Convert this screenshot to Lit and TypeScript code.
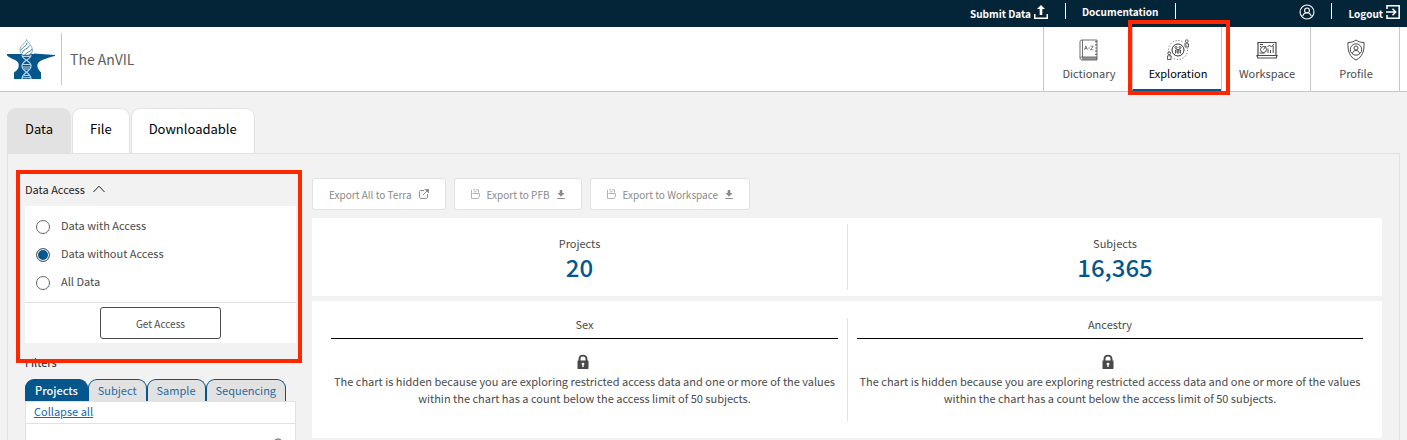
import { LitElement, html, css, svg } from "lit";
import { customElement, state } from "lit/decorators.js";

const person = svg`<circle cx="10" cy="8" r="3"/><path d="M4.8 15.2c.5-3 2.500-4.200 5.200-4.200s4.700 1.200 5.200 4.200"/>`;

const icons = {
  upload: svg`<svg class="fill" width="14" height="14" viewBox="0 0 14 14" aria-hidden="true"><path d="M7 0l4 4H8.300v6H5.700V4H3zM0 9h1.500v3.400h11V9H14v5H0z"/></svg>`,
  user: svg`<svg class="line strong" width="16" height="16" viewBox="0 0 20 20" aria-hidden="true"><circle cx="10" cy="10" r="8.700"/>${person}</svg>`,
  logout: svg`<svg class="line bold" width="14" height="14" viewBox="0 0 14 14" aria-hidden="true"><path d="M1 4V.8h12.200v12.400H1V10M0 7h9.500M6.500 3.800L9.700 7l-3.200 3.200"/></svg>`,
  dictionary: svg`<svg class="line" width="20" height="22" viewBox="0 0 20 22" aria-hidden="true"><path d="M3 1h15v17H3C.8 18 .8 21 3 21h15v-3M3 1C1.600 1 1 1.700 1 3v16.500M3.500 1v17" stroke-width=".8"/><path class="soft" d="M3 19.500h15" stroke-width="2.600"/><path d="M17 2v16" stroke-width="1.600" stroke-dasharray="1.200 2"/><path d="M5.400 10.800L6.900 7l1.500 3.800M6 9.600h1.800M9.300 9h1.400M11.500 7.200h2.800l-2.800 3.500h2.900" stroke-width=".7"/></svg>`,
  exploration: svg`<svg class="line" width="22" height="22" viewBox="0 0 22 22" aria-hidden="true"><circle cx="11" cy="11" r="6"/><circle cx="11" cy="11" r="9.500" stroke-width=".8" stroke-dasharray="1 2"/><g stroke-width=".8"><circle cx="9" cy="8.500" r="1"/><circle cx="13" cy="8.500" r="1"/><path d="M8.500 14.500V11h5v3.500M11 10.500v4.500M8.500 13h5M9.500 10l1.500 1 1.500-1"/><circle cx="19.800" cy="2.200" r="1.400"/><path d="M18 8V4.800h3.500V8z"/><circle cx="2.200" cy="14.200" r="1.400"/><path d="M.5 20.500v-3.700H4v3.700z"/></g></svg>`,
  workspace: svg`<svg class="line" width="22" height="22" viewBox="0 0 22 22" aria-hidden="true"><path d="M2 16V3.500h18V16M1 16.500h20l-.8 2.500H1.800z" stroke-width="1.200"/><path d="M4 5.500h3M4 7.500h1M3.500 14h5"/><circle cx="7.500" cy="10.500" r="3"/><path d="M7.500 10.500L10 7M12 14V9.500M14.500 14v-3M17.200 14V7M11.500 8l2-2 2 2 2.500-3"/></svg>`,
  profile: svg`<svg class="line" width="20" height="22" viewBox="0 0 20 22" aria-hidden="true"><path d="M10 1c2.200 1.800 5 2.500 8 2.500C18.500 12 16.500 17.800 10 21 3.500 17.800 1.500 12 2 3.500c3 0 5.800-.7 8-2.500z"/><circle cx="10" cy="10.500" r="5.700"/><circle cx="10" cy="9" r="2"/><path d="M6.500 14.500c.5-2.200 1.600-3 3.500-3s3 .8 3.500 3"/></svg>`,
  external: svg`<svg class="line" width="10" height="10" viewBox="0 0 10 10" aria-hidden="true"><path d="M5 1.500H1.500C1 1.500.6 1.900.6 2.400v6c0 .5.400 1 .9 1h6c.5 0 1-.5 1-1V5M4 6l4.500-4.500"/><path class="solid" d="M6 .2h3.800V4z"/></svg>`,
  folder: svg`<svg class="line pale" width="9" height="10" viewBox="0 0 9 10" aria-hidden="true"><path d="M.5 9.500V.8M2 .8h2M5 .8h2.500v2.700M.5 9.500h6.800l1.200-2.500V4.500H1.600M3 2.800h2.500"/></svg>`,
  download: svg`<svg class="fill" width="8" height="9" viewBox="0 0 8 9" aria-hidden="true"><path d="M2.700 0h2.600v3H7.500L4 6.700.5 3h2.200zM.3 8h7.400v1H.3z"/></svg>`,
  lock: svg`<svg class="fill" width="16" height="16" viewBox="0 0 16 16" aria-hidden="true"><path fill-rule="evenodd" d="M1.500 6.500V5C1.500 2.300 3.300.8 6 .8S10.500 2.300 10.500 5v1.500H11c.3 0 .5.200.5.500v7.500c0 .3-.2.500-.5.500H1c-.3 0-.5-.2-.5-.5V7c0-.3.2-.5.5-.5zm2 0h5V5c0-1.600-1-2.400-2.500-2.400S3.500 3.400 3.500 5zM6 8.700c-.9 0-1.400.6-1.400 1.300 0 .5.300.9.700 1.100V13h1.400v-1.900c.4-.2.700-.6.700-1.100 0-.7-.5-1.300-1.400-1.300z"/></svg>`,
  caret: svg`<svg class="line" width="12" height="8" viewBox="0 0 12 8" aria-hidden="true"><path d="M.5 7L6 1.200 11.500 7"/></svg>`,
};

const logo = svg`<svg class="logo" width="48" height="40" viewBox="0 0 48 40" role="img" aria-label="AnVIL">
  <path fill="#05568d" d="M0 15h27v-.5l21 1.500v1C42 18.500 33.500 21 31 24c-1.500 3-.5 6 3 9.500V40H7v-6.500c4-2.500 5.500-5.500 4.500-9C10.500 21 4 20 0 16.500z"/>
  <path fill="#fff" stroke="#6d9dbf" stroke-width=".8" d="M19.500.5c.7 3 6 5.500 6 10.500 0 2.500-1.500 4-3 5h-6.500c-1.500-1-3-2.500-3-5 0-5 5.700-6 6.500-10.500z"/>
  <path fill="none" stroke="#3f7ca9" d="M20 4c0 3-5 4-6 7.500M22.500 6.500C21.500 10 16 10 15 14M25 10c-1 3-6 3-7 6M24.500 14l-3 2.500"/>
  <path fill="none" stroke="#b9d7ea" stroke-width="1.200" d="M15 16c0 5 9 5 9 11s-9 6-9 13M24 16c0 5-9 5-9 11s9 6 9 13"/>
  <path fill="none" stroke="#b9d7ea" d="M16 17.500h7M16 25.500h7M15.500 28h8M17 30h5M16.500 36.500h6M15.500 38.700h8"/>
</svg>`;

const navItems = [
  { label: "Dictionary", icon: icons.dictionary },
  { label: "Exploration", icon: icons.exploration },
  { label: "Workspace", icon: icons.workspace },
  { label: "Profile", icon: icons.profile },
];

@customElement("app-root")
export class AppRoot extends LitElement {
  @state() access = "Data without Access";
  @state() page = "Exploration";
  @state() tab = "Data";
  @state() filter = "Projects";

  static styles = css`
    :host {
      display: block;
      height: 100vh;
      overflow: hidden;
      background: #f2f2f2;
      color: #4a4a4a;
      font: 11px/17px "Noto Sans CJK SC", "Open Sans", sans-serif;
    }
    * { box-sizing: border-box; }
    a { color: inherit; text-decoration: none; }
    button { font: inherit; color: inherit; margin: 0; cursor: pointer; }
    svg { display: block; flex: none; }
    .line { fill: none; stroke: currentColor; stroke-width: 1; }
    .strong { stroke-width: 1.4; }
    .bold { stroke-width: 1.6; }
    .pale { opacity: .65; }
    .soft { opacity: .6; }
    .fill, .solid { fill: currentColor; }

    .top {
      display: flex;
      justify-content: flex-end;
      height: 27px;
      padding: 3px 7px 0 0;
      background: #042538;
      color: #fff;
      font-size: 10px;
      font-weight: 700;
    }
    .top-item { display: flex; gap: 3px; height: 16px; padding: 0 17px 0 16px; }
    .top-item + .top-item { border-left: 1px solid #fff; }
    .top-item .low { padding-top: 2px; }
    .top .account { padding: 1px 16px 0 123px; }
    .top .end { padding-right: 0; }

    .bar {
      display: flex;
      align-items: center;
      height: 65px;
      padding: 0 7px;
      background: #fff;
      border-bottom: 1px solid #c6c6c6;
    }
    .brand {
      display: flex;
      align-items: center;
      margin-left: 6px;
      padding-left: 8px;
      height: 52px;
      border-left: 1px solid #c6c6c6;
      font-size: 14px;
      color: #606060;
    }
    .nav { display: flex; height: 64px; margin-left: auto; border-right: 1px solid #c6c6c6; }
    .nav-item {
      position: relative;
      display: flex;
      flex-direction: column;
      align-items: center;
      gap: 4px;
      width: 89px;
      padding: 12px 0 0 2px;
      border-left: 1px solid #c6c6c6;
    }
    .nav-item svg { height: 22px; }
    .nav-item.on { color: #000; border-bottom: 2px solid #05568d; }
    .nav-item.on svg { color: #333; }
    .mark { position: absolute; border: 4px solid #ff2600; pointer-events: none; }
    .nav-mark { inset: -7px -9px -6px -5px; }
    .side-mark { inset: -8px -6px -20px -9px; }

    .page { padding: 16px 7px 0; }
    .tabs { display: flex; gap: 1px; }
    .tab {
      height: 45px;
      padding: 0 17px 6px;
      border: 1px solid #e2e2e2;
      border-bottom: 0;
      border-radius: 9px 9px 0 0;
      background: #fff;
      color: #000;
      font-size: 13px;
    }
    .tab.on { background: #e2e2e2; }
    .panel {
      display: flex;
      gap: 16px;
      padding: 24px 17px;
      border: 1px solid #e2e2e2;
    }
    .side { width: 271px; flex: none; }
    .main { flex: 1; min-width: 0; }

    .access { position: relative; }
    .fold {
      display: flex;
      align-items: center;
      gap: 8px;
      height: 28px;
      padding: 0 0 6px;
      border: 0;
      background: none;
      color: #222;
    }
    .card { background: #fff; }
    .radios { display: grid; gap: 11px; padding: 11px 11px 12px; border: 0; margin: 0; min-width: 0; }
    .radio { display: flex; align-items: center; gap: 11px; }
    .radio input {
      appearance: none;
      width: 14px;
      height: 14px;
      margin: 2px 0 0;
      border: 1px solid #666;
      border-radius: 50%;
      background: #fff;
    }
    .radio input:checked { background: #05568d; box-shadow: inset 0 0 0 1px #fff; }
    .card-foot { display: flex; justify-content: center; padding: 4px; border-top: 1px solid #e2e2e2; }
    .get {
      width: 121px;
      height: 32px;
      padding: 0;
      border: 1px solid #4a4a4a;
      border-radius: 3px;
      background: #fff;
      font-size: 10px;
    }
    .heading { margin: 11px 0 8px; font-size: 11px; font-weight: 400; color: #222; }
    .filter-tabs { display: flex; }
    .filter-tab {
      height: 22px;
      padding: 0 9px 1px;
      border: 1px solid #05568d;
      border-bottom: 0;
      border-radius: 9px 9px 0 0;
      background: #e2e2e2;
      color: #2a6a9c;
      line-height: 17px;
    }
    .filter-tab.on { background: #05568d; color: #fff; font-weight: 500; }
    .facets { border: 1px solid #e2e2e2; background: #fff; height: 60px; }
    .collapse { display: block; height: 22px; padding: 1px 8px; border-bottom: 1px solid #e2e2e2; color: #1769b0; }
    .collapse span { text-decoration: underline; }
    .facet { display: flex; justify-content: flex-end; padding: 14px 10px; }
    .facet svg { width: 12px; height: 12px; }

    .actions { display: flex; gap: 8px; margin-bottom: 8px; }
    .action {
      display: flex;
      align-items: center;
      gap: 7px;
      height: 32px;
      padding: 0 16px;
      border: 1px solid #e2e2e2;
      border-radius: 3px;
      background: #fff;
      color: #8a8a8a;
      font-size: 10px;
    }
    .counts, .charts {
      display: grid;
      grid-template-columns: 1fr 1fr;
      background: #fff;
      text-align: center;
    }
    .counts { padding: 6px 0; margin-bottom: 5px; }
    .count { height: 66px; padding-top: 11px; }
    .count + .count, .chart + .chart { border-left: 1px solid #e2e2e2; }
    .number { color: #05568d; font-size: 24px; font-weight: 500; line-height: 30px; }
    .charts { padding: 17px 19px; }
    .chart { height: 103px; padding-right: 9px; }
    .chart + .chart { padding: 0 0 0 9px; }
    .chart-title {
      height: 21px;
      margin: 0 0 15px;
      border-bottom: 1px solid #000;
      font-size: 11px;
      font-weight: 400;
      line-height: 12px;
    }
    .chart svg { margin: 0 auto 3px; }
    .chart p { margin: 0; }
  `;

  render() {
    return html`
      <header>
        <div class="top">
          <a class="top-item" href="#"><span class="low">Submit Data</span><span class="low">${icons.upload}</span></a>
          <a class="top-item" href="#">Documentation</a>
          <a class="top-item account" href="#" aria-label="Account"><span>${icons.user}</span></a>
          <a class="top-item end" href="#"><span class="low">Logout</span><span class="low">${icons.logout}</span></a>
        </div>
        <div class="bar">
          ${logo}
          <div class="brand">The AnVIL</div>
          <nav class="nav">
            ${navItems.map((item) => html`
              <a class="nav-item ${item.label === this.page ? "on" : ""}" href="#">
                ${item.icon}<span>${item.label}</span>
                ${item.label === this.page ? html`<span class="mark nav-mark"></span>` : ""}
              </a>`)}
          </nav>
        </div>
      </header>
      <main class="page">
        <div class="tabs">
          ${["Data", "File", "Downloadable"].map((t) => html`
            <button class="tab ${t === this.tab ? "on" : ""}" @click=${() => (this.tab = t)}>${t}</button>`)}
        </div>
        <div class="panel">
          <aside class="side">
            <section class="access">
              <button class="fold">Data Access ${icons.caret}</button>
              <div class="card">
                <fieldset class="radios" aria-label="Data Access">
                  ${["Data with Access", "Data without Access", "All Data"].map((o) => html`
                    <label class="radio">
                      <input type="radio" name="access" .checked=${o === this.access} @change=${() => (this.access = o)} />${o}
                    </label>`)}
                </fieldset>
                <div class="card-foot"><button class="get">Get Access</button></div>
              </div>
              <div class="mark side-mark"></div>
            </section>
            <h2 class="heading">Filters</h2>
            <div class="filter-tabs">
              ${["Projects", "Subject", "Sample", "Sequencing"].map((f) => html`
                <button class="filter-tab ${f === this.filter ? "on" : ""}" @click=${() => (this.filter = f)}>${f}</button>`)}
            </div>
            <div class="facets">
              <a class="collapse" href="#"><span>Collapse all</span></a>
              <div class="facet">
                <svg class="line" viewBox="0 0 12 12" aria-hidden="true"><circle cx="5" cy="5.500" r="4.500"/><path d="M8.500 9l3 3"/></svg>
              </div>
            </div>
          </aside>
          <section class="main">
            <div class="actions">
              <button class="action">Export All to Terra ${icons.external}</button>
              <button class="action">${icons.folder} Export to PFB ${icons.download}</button>
              <button class="action">${icons.folder} Export to Workspace ${icons.download}</button>
            </div>
            <div class="counts">
              ${[["Projects", "20"], ["Subjects", "16,365"]].map(([name, n]) => html`
                <div class="count"><div>${name}</div><div class="number">${n}</div></div>`)}
            </div>
            <div class="charts">
              ${["Sex", "Ancestry"].map((name) => html`
                <div class="chart">
                  <h3 class="chart-title">${name}</h3>
                  ${icons.lock}
                  <p>The chart is hidden because you are exploring restricted access data and one or more of the values within the chart has a count below the access limit of 50 subjects.</p>
                </div>`)}
            </div>
          </section>
        </div>
      </main>
    `;
  }
}
